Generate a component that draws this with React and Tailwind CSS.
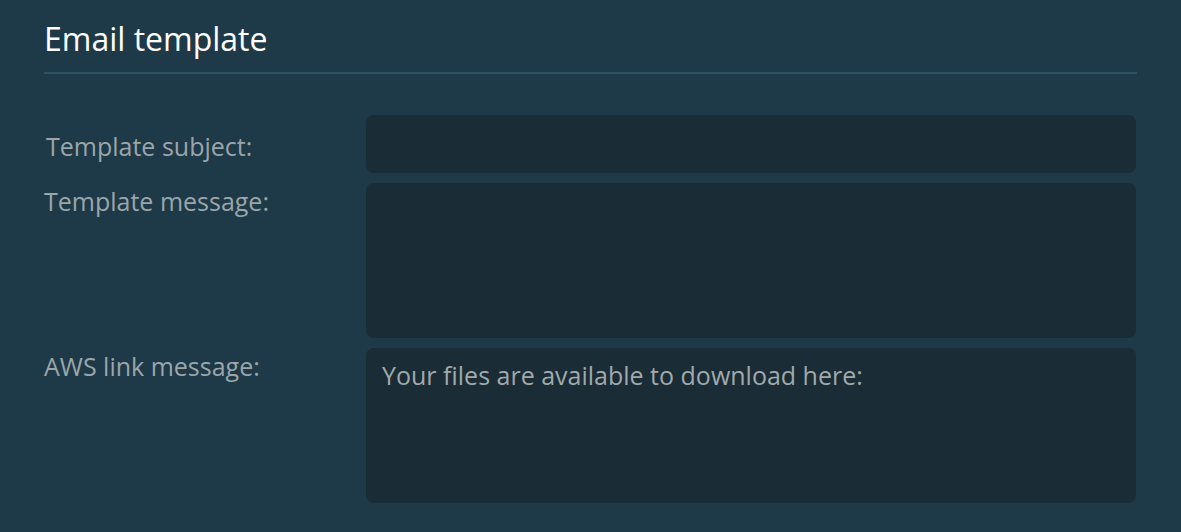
import React from 'react';

const font = { fontFamily: '"Open Sans", "Noto Sans", sans-serif' };

function Field({ label, children, center = false, labelClass = '' }) {
  return (
    <div className={`flex ${center ? 'items-center' : 'items-start'}`}>
      <label className={`w-[322px] shrink-0 text-[25px] leading-[34px] text-[#9aa6a9] ${labelClass}`}>{label}</label>
      {children}
    </div>
  );
}

export default function App() {
  return (
    <div className="min-h-[532px] w-full bg-[#1e3947] px-[44px] pt-[19px]" style={font}>
      <h2 className="text-[32px] leading-[40px] text-white pb-[13px] border-b-2 border-[#2c5364]">Email template</h2>

      <div className="mt-[41px] flex flex-col gap-[10px] pr-[1px]">
        <Field label="Template subject:" center labelClass="pl-[2px] pt-[3px]">
          <input
            type="text"
            className="flex-1 h-[58px] rounded-[8px] bg-[#1a2c35] px-4 text-[25px] text-[#a0a9ac] outline-none"
          />
        </Field>

        <Field label="Template message:" labelClass="mt-[1px]">
          <textarea
            className="flex-1 h-[155px] resize-none rounded-[8px] bg-[#1a2c35] px-4 py-[10px] text-[25px] leading-[34px] text-[#a0a9ac] outline-none"
          />
        </Field>

        <Field label="AWS link message:" labelClass="mt-[1px]">
          <textarea
            defaultValue="Your files are available to download here:"
            className="flex-1 h-[155px] resize-none rounded-[8px] bg-[#1a2c35] px-4 py-[10px] text-[25px] leading-[34px] text-[#a0a9ac] outline-none"
          />
        </Field>
      </div>
    </div>
  );
}
